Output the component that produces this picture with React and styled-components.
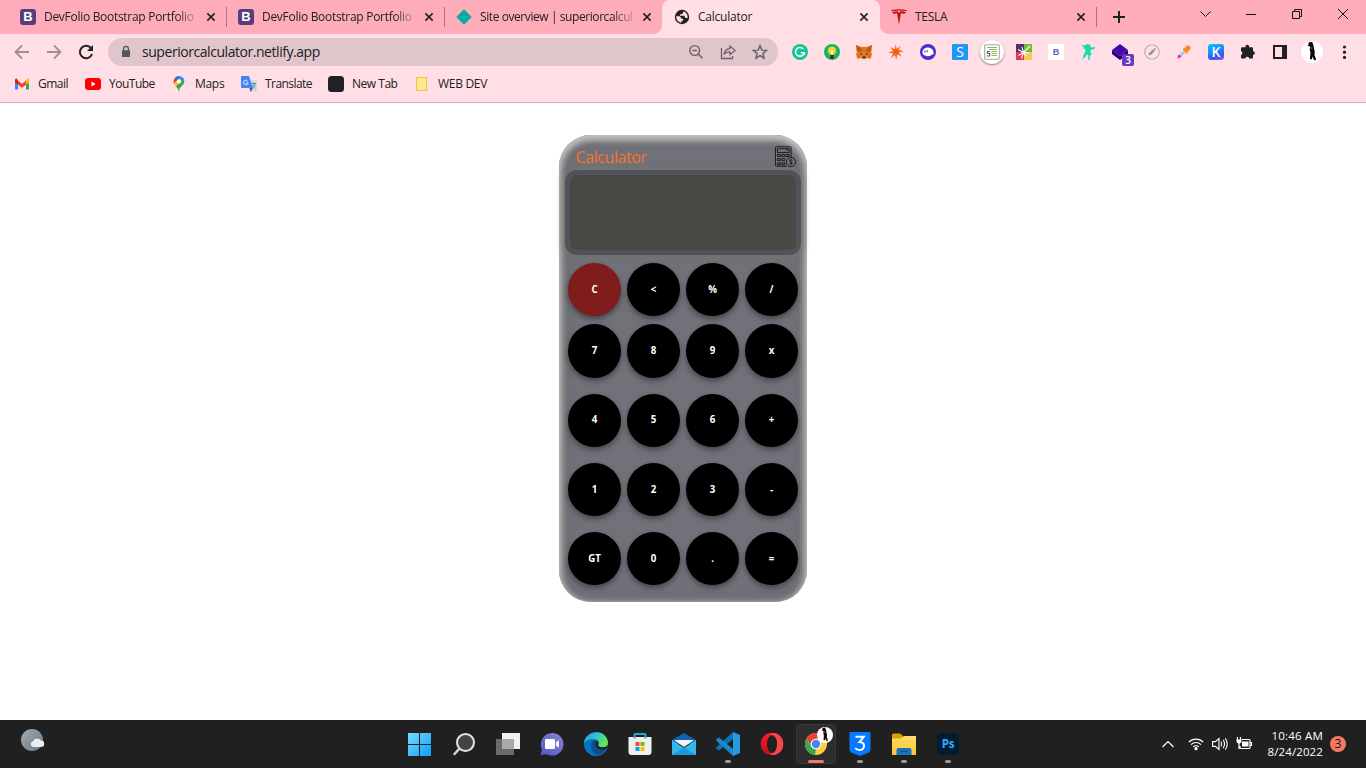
import React from "react";
import styled, { createGlobalStyle, css } from "styled-components";

const Global = createGlobalStyle`
  * { box-sizing: border-box; }
  body { margin: 0; background: #fff; overflow: hidden; }
  svg { display: block; flex: none; overflow: visible; }
`;

const Screen = styled.div`
  display: flex;
  flex-direction: column;
  width: 1366px;
  height: 768px;
  font-family: "Open Sans", "Noto Sans", sans-serif;
  font-size: 12px;
  color: #202124;
`;

/* Tab strip */
const TabStrip = styled.div`
  display: flex;
  height: 34px;
  padding-left: 8px;
  background: #ffacba;
`;
const Tab = styled.div`
  position: relative;
  display: flex;
  align-items: center;
  width: ${(p) => p.$w || 218}px;
  height: 34px;
  padding-left: ${(p) => p.$pad || 12}px;
  ${(p) =>
    p.$active &&
    css`
      background: #ffdfe5;
      border-radius: 8px 8px 0 0;
      &::before, &::after {
        content: "";
        position: absolute;
        bottom: 0;
        width: 8px;
        height: 8px;
      }
      &::before { left: -8px; background: radial-gradient(circle at 0 0, transparent 7.5px, #ffdfe5 8px); }
      &::after { right: -8px; background: radial-gradient(circle at 100% 0, transparent 7.5px, #ffdfe5 8px); }
    `}
  ${(p) =>
    p.$divider &&
    css`
      &::after {
        content: "";
        position: absolute;
        right: -1px;
        top: 7px;
        width: 1px;
        height: 20px;
        background: #a9747f;
      }
    `}
`;
const TabTitle = styled.span`
  width: ${(p) => p.$w || 158}px;
  margin-left: 8px;
  line-height: 16px;
  white-space: nowrap;
  letter-spacing: ${(p) => p.$ls ?? -0.14}px;
  ${(p) => p.$fade && css`mask-image: linear-gradient(90deg, #000 132px, transparent 157px);`}
`;
const CloseBox = styled.span`
  display: grid;
  place-items: center;
  width: 16px;
  margin-left: 1px;
`;
const NewTab = styled.div`
  display: grid;
  place-items: center;
  width: 44px;
`;
const WindowControls = styled.div`
  display: flex;
  height: 28px;
  margin-left: auto;
`;
const WindowButton = styled.div`
  display: grid;
  place-items: center;
  width: 46px;
`;

/* Toolbar */
const Toolbar = styled.div`
  display: flex;
  align-items: center;
  height: 36px;
  padding-left: 6px;
  background: #ffdfe5;
`;
const ToolCell = styled.div`
  position: relative;
  display: grid;
  place-items: center;
  width: 32px;
  height: 32px;
`;
const AddressBar = styled.div`
  display: flex;
  align-items: center;
  width: 670px;
  height: 28px;
  margin: 0 6px 0 6px;
  padding: 0 2px 0 10px;
  border-radius: 14px;
  background: #e0c5cb;
`;
const Address = styled.span`
  flex: 1;
  margin-left: 8px;
  font-size: 14px;
  line-height: 20px;
  letter-spacing: -0.45px;
`;
const LetterIcon = styled.span`
  display: grid;
  place-items: center;
  width: 16px;
  height: 16px;
  border-radius: ${(p) => p.$r || 0}px;
  background: ${(p) => p.$bg};
  color: ${(p) => p.$fg || "#fff"};
  font: ${(p) => p.$weight || 600} ${(p) => p.$size || 12}px/16px ${(p) => p.$family || '"Open Sans"'}, sans-serif;
`;
const RoundPlate = styled.span`
  display: grid;
  place-items: center;
  width: 24px;
  height: 24px;
  border-radius: 50%;
  background: #fff;
  box-shadow: 0 1px 2px rgba(60, 20, 30, 0.5);
`;
const CountBadge = styled.span`
  position: absolute;
  right: 2px;
  bottom: 2px;
  width: 12px;
  height: 12px;
  border-radius: 2px;
  background: #6b38c0;
  color: #fff;
  font: 600 10px/12px "Open Sans", sans-serif;
  text-align: center;
`;

/* Bookmarks */
const Bookmarks = styled.div`
  display: flex;
  align-items: center;
  gap: 16px;
  height: 33px;
  padding: 0 14px 4px;
  border-bottom: 1px solid #ccb2b8;
  background: #ffdfe5;
`;
const Bookmark = styled.div`
  display: flex;
  align-items: center;
  gap: 8px;
  height: 16px;
`;
const BookmarkLabel = styled.span`
  width: ${(p) => p.$w}px;
  line-height: 16px;
  white-space: nowrap;
  letter-spacing: ${(p) => p.$ls || 0}px;
`;

/* Page */
const Page = styled.main`
  display: flex;
  justify-content: center;
  align-items: flex-start;
  height: 617px;
  padding-top: 32px;
  background: #fff;
`;
const Calculator = styled.section`
  width: 248px;
  height: 467px;
  padding: 0 6px;
  border-radius: 32px;
  background: #71717a;
  box-shadow: inset 0 3px 6px 3px rgba(225, 225, 222, 0.75), inset 0 3px 12px 4px rgba(75, 75, 72, 0.4);
`;
const CalcHeader = styled.header`
  display: flex;
  justify-content: space-between;
  height: 35px;
  padding: 11px 5px 0 10.5px;
`;
const CalcTitle = styled.h1`
  margin: 0;
  color: #f97326;
  font-size: 16px;
  font-weight: 400;
  line-height: 23px;
  letter-spacing: -0.42px;
`;
const Display = styled.div`
  height: 85px;
  border: 5px solid #52525b;
  border-radius: 12px;
  background: #474944;
  box-shadow: 0 0 9px 1px rgba(112, 116, 100, 0.8);
`;
const Keypad = styled.div`
  display: flex;
  flex-direction: column;
  gap: 16px;
  padding: 8px 3px 0;
`;
const KeyRow = styled.div`
  display: flex;
  gap: 6px;
  ${(p) => p.$tight && css`margin-bottom: -8px;`}
`;
const Key = styled.button`
  width: 53px;
  height: 53.3px;
  padding: 0;
  border: 0;
  border-radius: 50%;
  background: ${(p) => (p.$danger ? "#7f1d1d" : "#000")};
  color: #fff;
  font: 700 9.7px/14px "Open Sans", sans-serif;
  letter-spacing: -0.1px;
  box-shadow: 0 4px 6px -1px rgba(0, 0, 0, 0.35), 0 1px 4px rgba(0, 0, 0, 0.15);
`;

/* Taskbar */
const Taskbar = styled.footer`
  display: grid;
  grid-template-columns: 398px 572px 1fr;
  height: 48px;
  background: #202020;
  color: #fff;
`;
const Weather = styled.div`
  padding: 8px 0 0 20px;
`;
const Apps = styled.div`
  display: flex;
`;
const App44 = styled.div`
  position: relative;
  display: grid;
  place-items: center;
  width: 44px;
  height: 48px;
  &::after {
    content: "";
    display: ${(p) => (p.$running || p.$current ? "block" : "none")};
    position: absolute;
    left: ${(p) => (p.$current ? 14 : 19)}px;
    bottom: 5px;
    width: ${(p) => (p.$current ? 16 : 6)}px;
    height: 3px;
    border-radius: 2px;
    background: ${(p) => (p.$current ? "#f5795f" : "#9a9a9a")};
  }
`;
const CurrentPlate = styled.div`
  display: grid;
  place-items: center;
  width: 40px;
  height: 40px;
  border: 1px solid #393939;
  border-radius: 4px;
  background: #2d2d2d;
`;
const AvatarBadge = styled.div`
  position: absolute;
  left: 23px;
  top: 7px;
`;
const Tray = styled.div`
  display: flex;
  justify-content: flex-end;
  align-items: center;
  padding-right: 20px;
`;
const TrayIcons = styled.div`
  display: flex;
  align-items: center;
  gap: 8px;
  margin-right: 14px;
`;
const Clock = styled.div`
  width: 57px;
  margin-right: 7px;
  font-size: 11.5px;
  line-height: 16px;
  text-align: right;
  white-space: nowrap;
`;
const ClockLine = styled.div`
  letter-spacing: ${(p) => p.$ls}px;
`;
const Notice = styled.span`
  width: 16px;
  height: 16px;
  border-radius: 50%;
  background: #f5795f;
  color: #111;
  font-size: 12px;
  line-height: 16px;
  text-align: center;
`;

const Svg = ({ s = 16, w, h, vb, children, ...rest }) => (
  <svg width={w || s} height={h || s} viewBox={vb || `0 0 ${w || s} ${h || s}`} fill="none" {...rest}>{children}</svg>
);
const Close = () => (
  <CloseBox><Svg s={8}><path d="M.4.4l7.2 7.2M7.6.4L.4 7.6" stroke="#202124" strokeWidth="1.6" /></Svg></CloseBox>
);
const Bootstrap = () => <LetterIcon $bg="#563d7c" $r={3} $size={13} $weight={700} $family='"Liberation Sans"'>B</LetterIcon>;
const Globe = () => (
  <Svg><circle cx="8" cy="8" r="7.2" fill="#202124" /><path d="M2.2 7.2h3.4l1.6 1.6v1h1.9v1.7l-1.5.4v1.6C4.4 13.4 2.2 10.8 2.2 7.2zM9.2 2.4v1.4L7.8 5.2H6v1.6h4.3l1 2.1h2.3c.5-3-1.4-5.9-4.4-6.5z" fill="#ffdfe5" /></Svg>
);
const Tesla = () => (
  <Svg w={18} h={16}><path d="M1 1.2Q9-.5 17 1.2l-.6 1Q9 .6 1.6 2.2zM2 3.5Q5 2.2 7.5 2.3L9 4l1.5-1.7Q13 2.2 16 3.5c-.8 1.1-1.5 1.3-2.8 1.5-.8-.8-1.4-.8-2.3-.8L9 15.7 7.1 4.2c-.9 0-1.5 0-2.3.8C3.5 4.8 2.8 4.6 2 3.5z" fill="#c90c0c" /></Svg>
);
const Avatar = ({ s = 22 }) => (
  <Svg s={s} vb="0 0 22 22"><circle cx="11" cy="11" r="11" fill="#fff" /><path d="M7.5 1.6l3.6-.8 1.4 3.6.6 3.6.6 2.2-.2 3.8 1.6 4.6-1 1-1.4-1-1.2-3-.6 2.6-2-.2.6-6-.8-3.8.4-2.6-2.6-.8 1-1z" fill="#0a0709" /><path d="M9.2 6.4l2-.4.4 1.4-1.7.6z" fill="#786078" /></Svg>
);

const extensions = [
  <Svg><circle cx="8" cy="8" r="8" fill="#15c39a" /><path d="M11.3 5A4.4 4.4 0 1 0 12.2 8.8H8.8M12.2 8.8v2.4" stroke="#fff" strokeWidth="1.5" /></Svg>,
  <Svg><circle cx="8" cy="8" r="8" fill="#18bd62" /><circle cx="8" cy="8" r="6.6" stroke="#07703c" strokeWidth=".8" strokeDasharray="1 2" /><path d="M8 2.6a4 4 0 0 0-2.2 7.3L6.4 11h3.2l.6-1.1A4 4 0 0 0 8 2.6z" fill="#ffd43b" /><path d="M6.2 11h3.6v2.8L8.9 15H7.1l-.9-1.2z" fill="#273338" /><path d="M7 6l1 1 1-1v4H7z" fill="#fff0a0" /></Svg>,
  <Svg><path d="M.2 1l5.2 2h5.2l5.2-2-.6 6 .6 4-1.2 4-3.5-1-1.5 1.3H6.4L4.9 14l-3.5 1L.2 11l.6-4z" fill="#e2761b" /><path d="M.2 1L6.3 5.6 5 8 .8 7zM15.8 1L9.7 5.6 11 8l4.2-1z" fill="#bc5a18" /><path d="M5 9l1.2 1.5-2 .2zM11 9l-1.2 1.5 2 .2z" fill="#24242c" /><path d="M5 12l1.4 2.8h3.2L11 12l-1.6 1H6.6z" fill="#c9b7a8" /><path d="M6.5 12.5h3v1.7h-3z" fill="#262329" /></Svg>,
  <Svg><path d="M7.6 0l1.2 5L12.6 1.8 10.7 6l5.3 1.2-5.2 1.2 3 4.4-4.4-2.5L8.2 16 7 11 2.6 14.2 5.2 9.4 0 8.6 5 7.3 2.4 2.8l4.3 2.6z" fill="#ee6a2c" /><circle cx="8" cy="8" r="2.8" fill="#ff5b00" /></Svg>,
  <Svg><circle cx="8" cy="8" r="8" fill="#4a2fc4" /><path d="M2.6 9.2C1.6 3.4 10 1.4 13 6.2l.8 3.6-1.8 1c-3.8 2.4-5.6 1.4-6.8.7-1.2-.2-2.3-.7-2.6-2.3z" fill="#fff" /><path d="M5 6.5v2M7.2 6.2v2" stroke="#4c34bb" strokeWidth="1.1" /></Svg>,
  <LetterIcon $bg="#2196f3" $size={14} $weight={400} $r={1}>S</LetterIcon>,
  <RoundPlate><Svg><rect x=".7" y=".7" width="14.6" height="14.6" rx="1" stroke="#a8a8a8" strokeWidth="1.1" /><path d="M3 3.5h10M5 5.5h8M7.5 7.5H13M7.5 9.5H13M7.5 11.5H13" stroke="#8bc34a" strokeWidth="1.2" /><path d="M6 7.5H3.5v2H5.6v2.5H2.8" stroke="#666" strokeWidth="1.2" /></Svg></RoundPlate>,
  <Svg><path d="M0 0h8v8H0z" fill="#513269" /><path d="M8 0h8v8H8z" fill="#72bd3a" /><path d="M0 8h8v8H0z" fill="#e3394d" /><path d="M8 8h8v8H8z" fill="#f1ca55" /><path d="M7.5 8.5L6 3M7.5 8.5L2 5.5M7.5 8.5l-5 3M7.5 8.5l-2 6M7.5 8.5l6 .5M7.5 8.5L14 2M7.5 8.5l3 4" stroke="#fff" strokeWidth="1.1" /></Svg>,
  <LetterIcon $bg="#fff" $fg="#6364bf" $size={9} $weight={700} $family='"Liberation Sans"'>B</LetterIcon>,
  <Svg><path d="M1 1l4 .6L7 0l3 .8.8 2.7 4.5-.4-1.1 2-3.5.6-.3 2.5 1.3 2-1.5 1.3-.4 3.7-1.8.8.6-4.2L7 10.2 5.2 13l-2.8 2.6 1-4 2-4-.7-3-2.6-.4 2-.9z" fill="#10dfaa" /></Svg>,
  <><Svg><path d="M8 0l8 6-8 6-8-6z" fill="#4506ae" /><path d="M0 6l8 6 8-6v4l-8 6-8-6z" fill="#250078" /></Svg><CountBadge>3</CountBadge></>,
  <Svg><circle cx="8" cy="8" r="7.3" stroke="#bbb0b3" strokeWidth="1.1" /><path d="M4.6 11.3l.5-2L9 5.3l1.7 1.6-4 4z" fill="#909090" /><path d="M9.6 4.7l1.6 1.6 1-.9L10.6 4z" fill="#909090" /></Svg>,
  <Svg><path d="M2.4 13.4l.4-2.4L8 6 10 8 5 13z" fill="#9fcdf7" /><path d="M1.6 14.4l.4-2.8 1.4-.9 1.8 1.8-1.4 1.3z" fill="#ff1e62" /><path d="M7 4.6l1.4-.4 2-2.2q2-1.2 3.6.2 1.3 1.7 0 3.5l-2.2 1.9-.2 1.6-1 .2L7 5.6z" fill="#ff8a13" /></Svg>,
  <LetterIcon $bg="linear-gradient(160deg, #05bdfc 10%, #3b57ee 75%, #9762f4)" $size={14} $weight={600} $r={3}>K</LetterIcon>,
  <Svg><path d="M1 4.6Q1 3.3 2.2 3.3h3.2v-.6a1.9 1.9 0 0 1 3.8 0v.6h2.6q1.2 0 1.2 1.2v2.7a1.9 1.9 0 0 1 0 3.8v2.4q0 1.2-1.2 1.2H9.2a1.9 1.9 0 0 0-3.8 0H2.2Q1 14.6 1 13.4v-2.5a1.9 1.9 0 0 0 0-3.7z" fill="#202124" /></Svg>,
  <Svg><path d="M2 2h12v12H2z" stroke="#202124" strokeWidth="2" /><path d="M10 2h4v12h-4z" fill="#202124" /></Svg>,
  <Avatar />,
  <Svg><circle cx="8.5" cy="3" r="1.6" fill="#202124" /><circle cx="8.5" cy="8.2" r="1.6" fill="#202124" /><circle cx="8.5" cy="13.4" r="1.6" fill="#202124" /></Svg>,
];

const Gmail = () => (
  <Svg><path d="M1 4v9.5h3V7z" fill="#4285f4" /><path d="M12 7v6.5h3V4z" fill="#34a853" /><path d="M12 4.8v4L15 6.5V4q-.2-2.2-2-1.2z" fill="#fbbc04" /><path d="M4 4.8l4 3 4-3v4l-4 3-4-3z" fill="#ea4335" /><path d="M1 4q.2-2.2 2-1.2l1 1.9v4L1 6.5z" fill="#c5221f" /></Svg>
);
const YouTube = () => <Svg><rect y="2" width="16" height="12" rx="3" fill="#f00" /><path d="M6.5 5.5v5L10.7 8z" fill="#fff" /></Svg>;
const Maps = () => (
  <Svg><path d="M8 0a5.6 5.6 0 0 0-4.3 2L6 4.5 10 .4Q9 0 8 0z" fill="#1a73e8" /><path d="M3.7 2Q1.8 4.7 3 7.6L7 3.7z" fill="#ea4335" /><path d="M10 .4L5.9 5.2 8 7.5l5-4.7Q12 1 10 .4z" fill="#4285f4" /><path d="M13 2.8q1 2.7-.4 5.1L8.9 12Q8.3 13 8 16 7.5 12.7 4.8 10.3z" fill="#34a853" /><path d="M3 7.6l3-3 2.4 3-3.6 2.7z" fill="#fbbc04" /><circle cx="8" cy="5.4" r="2.1" fill="#fff" /></Svg>
);
const Translate = () => (
  <Svg><path d="M6 4h9q1 0 1 1v10q0 1-1 1H9z" fill="#d3dce0" /><path d="M1 0h7l4 12H1q-1 0-1-1V1q0-1 1-1z" fill="#4285f4" /><path d="M8.5 12H12l-2.5 4z" fill="#2858b8" /><path d="M6.6 4.9a2.3 2.3 0 1 0 .6 2H5" stroke="#e8f0fe" strokeWidth="1" /><path d="M10.5 7.5h4.6M12.7 6.5v1M14.2 7.5q-.6 2.7-3 4.4M11.8 8.8q.8 2 2.7 3.3" stroke="#607d8b" strokeWidth=".9" /></Svg>
);
const NewTabIcon = () => <Svg><rect width="16" height="16" rx="3.5" fill="#202124" /></Svg>;
const Folder = () => <Svg><path d="M2.5 1.5h10V11q1 .5 1 1.5t-1 2h-10z" fill="#ffe793" stroke="#eec643" /><path d="M11.8 14.5q-1-2 .7-3.5" stroke="#eec643" /></Svg>;

const bookmarks = [
  ["Gmail", 31, -0.5, <Gmail />],
  ["YouTube", 46, -0.5, <YouTube />],
  ["Maps", 30, -0.3, <Maps />],
  ["Translate", 47, -0.55, <Translate />],
  ["New Tab", 46, -0.48, <NewTabIcon />],
  ["WEB DEV", 50, -0.3, <Folder />],
];

const rows = [["C", "<", "%", "/"], ["7", "8", "9", "x"], ["4", "5", "6", "+"], ["1", "2", "3", "-"], ["GT", "0", ".", "="]];

const CalcIcon = () => (
  <Svg w={21} h={22} vb="0 0 21.5 22"><g stroke="#1c1c1f" strokeWidth="1"><path d="M12 20.5H1.5q-1 0-1-1v-18q0-1 1-1h14q1 0 1 1v9.5" /><path d="M2.5 2.5h12v4h-12zM12.5 2.5v2" /><path d="M2.5 8.5h3v2h-3zM7 8.5h3v2H7zM11.5 8.5h3v2h-3zM2.5 12.7h3v2h-3zM7 12.7h3v2H7zM2.5 17h3v2h-3zM7 17h3v2H7z" /><circle cx="16.3" cy="16.2" r="4.7" /><path d="M17.8 14.5q-1.5-1.1-2.6-.2-.8 1.1 1.1 1.8 2 .7 1.2 1.7-1 1-2.7 0M16.3 13v6.4" strokeWidth=".8" /></g></Svg>
);

const Gradients = () => (
  <defs>
    <linearGradient id="win" x1="0" y1="0" x2="1" y2="1"><stop stopColor="#79d9ff" /><stop offset="1" stopColor="#0aa0f5" /></linearGradient>
    <linearGradient id="chat" x1="1" y1="0" x2="0" y2="1"><stop stopColor="#8c83cf" /><stop offset="1" stopColor="#5258c5" /></linearGradient>
    <linearGradient id="edge" x1="0" y1="0" x2="1" y2=".3"><stop stopColor="#249bd8" /><stop offset=".55" stopColor="#35c3cf" /><stop offset="1" stopColor="#67e451" /></linearGradient>
    <linearGradient id="moon" x1="0" y1="0" x2="1" y2="1"><stop stopColor="#a1abb5" /><stop offset="1" stopColor="#6d7780" /></linearGradient>
    <linearGradient id="folder" x1="0" y1="0" x2="0" y2="1"><stop stopColor="#ffdc68" /><stop offset="1" stopColor="#ffc62f" /></linearGradient>
    <linearGradient id="opera" x1="0" y1="0" x2="0" y2="1"><stop stopColor="#ff1b2d" /><stop offset="1" stopColor="#b80f20" /></linearGradient>
  </defs>
);

const PsBox = styled.span`
  display: grid;
  place-items: center;
  width: 22px;
  height: 22px;
  border-radius: 4px;
  background: #001d33;
  color: #31a8ff;
  font: 700 11.5px/20px "Open Sans", sans-serif;
  letter-spacing: -0.3px;
`;

const apps = [
  { icon: <Svg s={24}><Gradients /><path d="M0 0h11v11H0zM12 0h11v11H12zM0 12h11v11H0zM12 12h11v11H12z" transform="translate(0 1)" fill="url(#win)" /></Svg> },
  { icon: <Svg s={24}><circle cx="13.5" cy="10.5" r="8.5" fill="#444" stroke="#e6e6e6" strokeWidth="2" /><path d="M7.4 16.6L2.5 22" stroke="#d5d5d5" strokeWidth="2.5" strokeLinecap="round" /></Svg> },
  { icon: <Svg s={24}><path d="M6 1h18v16H6z" fill="#f1f1f1" /><path d="M0 7h18v16H0z" fill="#6a6a6a" /><path d="M6 7h12v10H6z" fill="#a9a9a9" /></Svg> },
  { icon: <Svg s={24}><path d="M12 1a11.3 11.3 0 1 1-5.2 21.2L.5 23l1.5-5.6A11.3 11.3 0 0 1 12 1z" fill="url(#chat)" /><rect x="5" y="7" width="10" height="10" rx="1.2" fill="#fff" /><path d="M16 10.6L18.7 8v8L16 13.4z" fill="#fff" /></Svg> },
  { icon: <Svg s={24}><circle cx="12" cy="12" r="12" fill="#0875c4" /><path d="M0 11C1-1 21-5 24 10c0 5-4 6-8 5-4-.8-1-1-1.2-4.2C14 6 5 5.5 0 11z" fill="url(#edge)" /><path d="M7 14c0-5 4-7 7-5-4 1-3 7 2 7.5 3 .3 5-.5 6.4-1.5C18 27 7 24 7 14z" fill="#0c4d91" /><path d="M12.7 8.8c1.5.2 2.1 1.5 1.5 3.1-.7 1.7.6 2.7 2.8 3.3 3 .5 5-.3 7-1.7l-1.4 3.2C18 19 12 17 11.5 13c0-2 .2-3.2 1.2-4.2z" fill="#202020" /></Svg> },
  { icon: <Svg s={24}><path d="M.5 5h23v15q0 3-3 3h-17q-3 0-3-3z" fill="#f0f0f0" /><path d="M6.5 6.5V3q0-1 1-1h9q1 0 1 1v3.5" stroke="#27a9dd" strokeWidth="2" /><path d="M7.5 10h4v4h-4z" fill="#f25022" /><path d="M12.5 10h4v4h-4z" fill="#7fba00" /><path d="M7.5 15h4v4h-4z" fill="#00a4ef" /><path d="M12.5 15h4v4h-4z" fill="#ffb900" /></Svg> },
  { icon: <Svg s={24}><path d="M0 8l12-7 12 7v4H0z" fill="#0b63b4" /><path d="M0 8v15h24V8l-12 8z" fill="#35b8ea" /><path d="M0 23l12-7.5L24 23z" fill="#1b97dd" /><path d="M2 8h20l-10 7z" fill="#f5f5f5" /></Svg> },
  { running: true, icon: <Svg s={24}><path d="M17 0l7 3v18l-7 3z" fill="#249bdc" /><path d="M17 0v7L3 18.5.3 16.8v-1.5z" fill="#0875b9" /><path d="M17 24v-7L3 5.5.3 7.2v1.5z" fill="#1688cc" /></Svg> },
  { icon: <Svg s={24}><circle cx="12" cy="12" r="11.3" fill="url(#opera)" /><path d="M15 1.1q8.3 3 8.3 10.9T15 22.9q-3 .7-5.5-1.4 7.5.5 7.5-9.5T9.5 2.5Q12 .5 15 1.1z" fill="#f4484f" /><ellipse cx="12" cy="12" rx="5" ry="8.7" fill="#202020" /></Svg> },
  { current: true, icon: <CurrentPlate><Svg s={22}><circle cx="11" cy="11" r="11" fill="#ffcd40" /><path d="M1.5 5.5A11 11 0 0 1 20.5 5.5H11L6 13z" fill="#ea4335" /><path d="M1.5 5.5L6.2 13.7 11 16l-1 6A11 11 0 0 1 1.5 5.5z" fill="#34a853" /><circle cx="11" cy="11" r="5.3" fill="#fff" /><circle cx="11" cy="11" r="4.2" fill="#4285f4" /></Svg></CurrentPlate> },
  { running: true, icon: <Svg s={24}><path d="M1.5 0h21v17q0 3-3 4L12 24l-7.5-3q-3-1-3-4z" fill="#057aff" /><path d="M7.5 4.8h8.2L11.5 10c6.5 0 5.5 8 .3 8q-3 0-4.6-2" stroke="#fff" strokeWidth="2" /></Svg> },
  { running: true, icon: <Svg s={24}><path d="M0 3q0-1.5 1.5-1.5H8l3 2.5v6H0z" fill="#dfa100" /><path d="M0 6.5h9L12 4h12v19H0z" fill="url(#folder)" /><path d="M4.5 23v-5q0-2 2-2h11q2 0 2 2v5z" fill="#1674bd" /><path d="M8 19.5h8" stroke="#0c559a" strokeWidth="1.5" /></Svg> },
  { running: true, icon: <PsBox>Ps</PsBox> },
];

export default function App() {
  return (
    <Screen>
      <Global />
      <TabStrip>
        <Tab $divider><Bootstrap /><TabTitle $fade $ls={-0.29}>DevFolio Bootstrap Portfolio</TabTitle><Close /></Tab>
        <Tab $divider><Bootstrap /><TabTitle $fade $ls={-0.29}>DevFolio Bootstrap Portfolio</TabTitle><Close /></Tab>
        <Tab><Svg><path d="M8 .3L15.7 8 8 15.7.3 8z" fill="#05ae9f" /></Svg><TabTitle $fade $ls={-0.42}>Site overview | superiorcalcul</TabTitle><Close /></Tab>
        <Tab $active><Globe /><TabTitle $w={157} $ls={-0.22}>Calculator</TabTitle><Close /></Tab>
        <Tab $divider $w={216} $pad={11}><Svg vb="1 0 16 16"><Tesla /></Svg><TabTitle $w={157} $ls={-0.3}>TESLA</TabTitle><Close /></Tab>
        <NewTab><Svg s={12}><path d="M7 0v12M1 6h12" stroke="#202124" strokeWidth="2" /></Svg></NewTab>
        <WindowControls>
          <WindowButton><Svg w={11} h={6}><path d="M.5.5l5 5 5-5" stroke="#111" /></Svg></WindowButton>
          <WindowButton><Svg s={10}><path d="M0 5.5h10" stroke="#111" /></Svg></WindowButton>
          <WindowButton><Svg s={10}><path d="M.5 2.5h7v7h-7zM2.5 2.5v-2h7v7h-2" stroke="#111" /></Svg></WindowButton>
          <WindowButton><Svg s={10}><path d="M0 0l10 10M10 0L0 10" stroke="#111" /></Svg></WindowButton>
        </WindowControls>
      </TabStrip>

      <Toolbar>
        <ToolCell><Svg><path d="M15 8H2M8 1.5L1.5 8 8 14.5" stroke="#a18d94" strokeWidth="1.8" /></Svg></ToolCell>
        <ToolCell><Svg><path d="M1 8h13M8 1.5L14.5 8 8 14.5" stroke="#a18d94" strokeWidth="1.8" /></Svg></ToolCell>
        <ToolCell><Svg><path d="M13 4.2A6.2 6.2 0 1 0 14 10" stroke="#202124" strokeWidth="2" /><path d="M15 1v6H9z" fill="#202124" /></Svg></ToolCell>
        <AddressBar>
          <Svg><path d="M4.5 6.3h7q.5 0 .5.5v6.2H4V6.8q0-.5.5-.5z" fill="#54575b" /><path d="M5.6 7V4.7a2.4 2.4 0 0 1 4.8 0V7" stroke="#54575b" strokeWidth="1.3" /></Svg>
          <Address>superiorcalculator.netlify.app</Address>
          <ToolCell><Svg><circle cx="6.7" cy="6.5" r="4.9" stroke="#6a6267" strokeWidth="1.4" /><path d="M10.3 10.1l4.2 4.2M4.5 6.5h4.4" stroke="#6a6267" strokeWidth="1.5" /></Svg></ToolCell>
          <ToolCell><Svg><path d="M1.5 4v10.5H12.5V12" stroke="#6a6267" strokeWidth="1.3" /><path d="M4 10.5q.7-5.5 6-5.8V2l5 4.4-5 4.3V7.8Q6 7.7 4 10.5z" stroke="#6a6267" strokeWidth="1.2" /></Svg></ToolCell>
          <ToolCell><Svg><path d="M8 1.6l1.8 4.5 4.8.3-3.7 3.1 1.2 4.7L8 11.6l-4.1 2.6 1.2-4.7-3.7-3.1 4.8-.3z" stroke="#5f6368" strokeWidth="1.4" /></Svg></ToolCell>
        </AddressBar>
        {extensions.map((icon, i) => <ToolCell key={i}>{icon}</ToolCell>)}
      </Toolbar>

      <Bookmarks>
        {bookmarks.map(([label, w, ls, icon]) => (
          <Bookmark key={label}>{icon}<BookmarkLabel $w={w} $ls={ls}>{label}</BookmarkLabel></Bookmark>
        ))}
      </Bookmarks>

      <Page>
        <Calculator>
          <CalcHeader><CalcTitle>Calculator</CalcTitle><CalcIcon /></CalcHeader>
          <Display />
          <Keypad>
            {rows.map((row, i) => (
              <KeyRow key={i} $tight={i === 0}>
                {row.map((k) => <Key key={k} $danger={k === "C"}>{k}</Key>)}
              </KeyRow>
            ))}
          </Keypad>
        </Calculator>
      </Page>

      <Taskbar>
        <Weather><Svg s={26}><circle cx="12" cy="12" r="11" fill="url(#moon)" /><path d="M13 19a3 3 0 0 1 0-5.8 4.5 4.5 0 0 1 8-.6 3.2 3.2 0 0 1 0 6.4z" fill="#e9eef3" /></Svg></Weather>
        <Apps>
          {apps.map((a, i) => (
            <App44 key={i} $running={a.running} $current={a.current}>
              {a.icon}
              {a.current && <AvatarBadge><Avatar s={16} /></AvatarBadge>}
            </App44>
          ))}
        </Apps>
        <Tray>
          <TrayIcons>
            <Svg w={12} h={8}><path d="M.5 7L6 1.5 11.5 7" stroke="#fff" strokeWidth="1.2" /></Svg>
            <Svg w={22} h={16} vb="-6 0 22 16"><path d="M.8 6.2a10 10 0 0 1 14.4 0M3 8.6a7 7 0 0 1 10 0M5.2 10.9a4 4 0 0 1 5.6 0" stroke="#fff" strokeWidth="1.2" /><circle cx="8" cy="12.7" r="1.6" fill="#fff" /></Svg>
            <Svg><path d="M.6 5.6h2.8L7 2.5v11l-3.6-3.1H.6z" stroke="#fff" strokeWidth="1.1" /><path d="M9 5.5q1.6 2.5 0 5M11.2 3.8q2.7 4.2 0 8.4M13.3 2.2q3.9 5.8 0 11.6" stroke="#fff" strokeWidth="1.1" /></Svg>
            <Svg><path d="M6 3.5h7q1 0 1 1v7q0 1-1 1H5q-1 0-1-1V10M14.5 6.5h1v3h-1M1.5 1v3M4.5 1v3M3 7v6" stroke="#fff" strokeWidth="1.2" /><path d="M.5 3.5h5V6q-2.5 3-5 0zM6 5.5h6.5v5H6z" fill="#fff" /></Svg>
          </TrayIcons>
          <Clock><ClockLine $ls={0.2}>10:46 AM</ClockLine><ClockLine $ls={0.12}>8/24/2022</ClockLine></Clock>
          <Notice>3</Notice>
        </Tray>
      </Taskbar>
    </Screen>
  );
}
